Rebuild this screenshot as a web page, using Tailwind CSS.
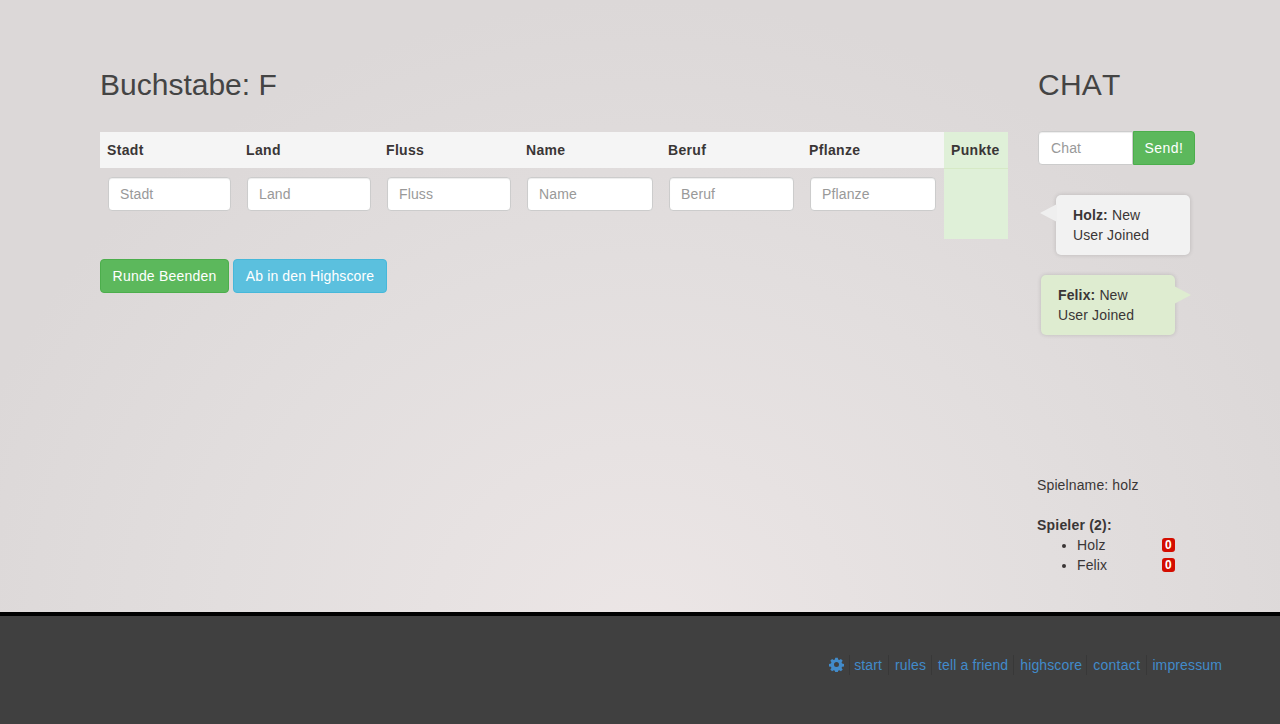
<!DOCTYPE html>
<html lang="de">
<head>
    <meta charset="UTF-8">
    <title>Stadt Land Fluss</title>
    <script src="https://cdn.jsdelivr.net/npm/@tailwindcss/browser@4"></script>
</head>
<body class="h-[724px] overflow-hidden font-['Liberation_Sans',Arial,sans-serif] text-sm leading-5 text-[#3a3636] tracking-[0.13px] [font-kerning:none]">
    <!-- Main area -->
    <div class="h-[612px] flex bg-[radial-gradient(ellipse_700px_640px_at_640px_640px,#ece6e6_0%,#e2dede_60%,#dcd8d8_100%)] pl-[100px]">
        <!-- Game column -->
        <div class="w-[908px] pt-[68px]">
            <h1 class="text-[30px] leading-[33px] tracking-normal text-[#444]">Buchstabe: F</h1>
            <table class="mt-[31px] table-fixed w-[908px] border-collapse">
                <colgroup>
                    <col class="w-[139px]"><col class="w-[140px]"><col class="w-[140px]"><col class="w-[142px]"><col class="w-[141px]"><col class="w-[142px]"><col class="w-[64px]">
                </colgroup>
                <thead>
                    <tr class="h-[36px] bg-[#f5f5f5] text-left font-bold tracking-[0.33px]">
                        <th class="pl-[7px]">Stadt</th>
                        <th class="pl-[7px]">Land</th>
                        <th class="pl-[7px]">Fluss</th>
                        <th class="pl-[7px]">Name</th>
                        <th class="pl-[7px]">Beruf</th>
                        <th class="pl-[7px]">Pflanze</th>
                        <th class="pl-[7px] bg-[#dff0d8] border-b border-[#d6e9c6]">Punkte</th>
                    </tr>
                </thead>
                <tbody>
                    <tr class="h-[71px] align-top">
                        <td class="pl-[8px] pt-[9px]"><input placeholder="Stadt" class="w-[123px] h-[34px] px-[11px] bg-white border border-[#ccc] rounded shadow-[inset_0_1px_1px_rgba(0,0,0,0.075)] text-[#555] placeholder:text-[#999]"></td>
                        <td class="pl-[8px] pt-[9px]"><input placeholder="Land" class="w-[124px] h-[34px] px-[11px] bg-white border border-[#ccc] rounded shadow-[inset_0_1px_1px_rgba(0,0,0,0.075)] text-[#555] placeholder:text-[#999]"></td>
                        <td class="pl-[8px] pt-[9px]"><input placeholder="Fluss" class="w-[124px] h-[34px] px-[11px] bg-white border border-[#ccc] rounded shadow-[inset_0_1px_1px_rgba(0,0,0,0.075)] text-[#555] placeholder:text-[#999]"></td>
                        <td class="pl-[8px] pt-[9px]"><input placeholder="Name" class="w-[126px] h-[34px] px-[11px] bg-white border border-[#ccc] rounded shadow-[inset_0_1px_1px_rgba(0,0,0,0.075)] text-[#555] placeholder:text-[#999]"></td>
                        <td class="pl-[8px] pt-[9px]"><input placeholder="Beruf" class="w-[125px] h-[34px] px-[11px] bg-white border border-[#ccc] rounded shadow-[inset_0_1px_1px_rgba(0,0,0,0.075)] text-[#555] placeholder:text-[#999]"></td>
                        <td class="pl-[8px] pt-[9px]"><input placeholder="Pflanze" class="w-[126px] h-[34px] px-[11px] bg-white border border-[#ccc] rounded shadow-[inset_0_1px_1px_rgba(0,0,0,0.075)] text-[#555] placeholder:text-[#999]"></td>
                        <td class="bg-[#dff0d8]"></td>
                    </tr>
                </tbody>
            </table>
            <div class="mt-[20px] flex gap-1">
                <button class="w-[129px] h-[34px] rounded bg-[#5cb85c] border border-[#4cae4c] text-white tracking-[0.2px]">Runde Beenden</button>
                <button class="w-[154px] h-[34px] rounded bg-[#5bc0de] border border-[#46b8da] text-white tracking-[0.12px]">Ab in den Highscore</button>
            </div>
        </div>

        <!-- Chat column -->
        <div class="ml-[30px] w-[157px] pt-[68px] flex flex-col">
            <h1 class="text-[30px] leading-[33px] tracking-[0.25px] text-[#444]">CHAT</h1>
            <div class="mt-[30px] flex">
                <input placeholder="Chat" class="w-[95px] h-[34px] px-3 bg-white border border-[#ccc] rounded-l shadow-[inset_0_1px_1px_rgba(0,0,0,0.075)] text-[#555] placeholder:text-[#999]">
                <button class="w-[62px] h-[34px] rounded-r bg-[#5cb85c] border border-[#4cae4c] text-white tracking-[0.45px]">Send!</button>
            </div>
            <div class="relative mt-[30px] ml-[18px] w-[134px] h-[60px] px-[17px] py-[10px] rounded-[5px] bg-[#f2f2f2] shadow-[0_0_4px_rgba(0,0,0,0.16)]">
                <svg class="absolute left-[-16px] top-[9px]" width="17" height="18" viewBox="0 0 17 18"><polygon points="0,9 17,0 17,18" fill="#efefef"/></svg>
                <b>Holz:</b> New<br>User Joined
            </div>
            <div class="relative mt-[20px] ml-[3px] w-[134px] h-[60px] px-[17px] py-[10px] rounded-[5px] bg-[#deecd0] shadow-[0_0_4px_rgba(0,0,0,0.16)]">
                <svg class="absolute right-[-16px] top-[11px]" width="17" height="18" viewBox="0 0 17 18"><polygon points="17,9 0,0 0,18" fill="#deecd0"/></svg>
                <b>Felix:</b> New<br>User Joined
            </div>
            <p class="mt-[140px] -ml-px">Spielname: holz</p>
            <p class="mt-[20px] -ml-px font-bold tracking-[0.2px]">Spieler (2):</p>
            <ul class="list-disc pl-[39px] w-[137px]">
                <li class="relative">Holz<span class="absolute right-0 top-[3px] w-[13px] h-[14px] rounded-[3px] bg-[#d40d00] text-white text-xs font-bold leading-[14px] text-center">0</span></li>
                <li class="relative">Felix<span class="absolute right-0 top-[3px] w-[13px] h-[14px] rounded-[3px] bg-[#d40d00] text-white text-xs font-bold leading-[14px] text-center">0</span></li>
            </ul>
        </div>
    </div>

    <!-- Footer -->
    <div class="h-[112px] border-t-4 border-black bg-[#404040] flex items-center justify-end pr-[58px] pb-[10px] text-[#428bca]">
        <svg class="mr-[5px] -mt-[2px]" width="15" height="15" viewBox="0 0 24 24" fill="#428bca"><path fill-rule="evenodd" d="M10 1h4l.6 3.1 1.9.8 2.6-1.8 2.8 2.8-1.8 2.6.8 1.9 3.1.6v4l-3.1.6-.8 1.9 1.8 2.6-2.8 2.8-2.6-1.8-1.9.8-.6 3.1h-4l-.6-3.1-1.9-.8-2.6 1.8-2.8-2.8 1.8-2.6-.8-1.9-3.1-.6v-4l3.1-.6.8-1.9-1.8-2.6 2.8-2.8 2.6 1.8 1.9-.8zM12 8a4 4 0 1 0 0 8 4 4 0 0 0 0-8z"/></svg>
        <span class="flex">
            <a class="pl-[4px] pr-[6px] border-l border-[#383838]">start</a>
            <a class="pl-[6px] pr-[5px] border-l border-[#383838]">rules</a>
            <a class="pl-[6px] pr-[5px] border-l border-[#383838]">tell a friend</a>
            <a class="pl-[6px] pr-[4px] border-l border-[#383838]">highscore</a>
            <a class="pl-[6px] pr-[6px] border-l border-[#383838] tracking-[0.3px]">contact</a>
            <a class="pl-[5px] border-l border-[#383838]">impressum</a>
        </span>
    </div>
</body>
</html>
